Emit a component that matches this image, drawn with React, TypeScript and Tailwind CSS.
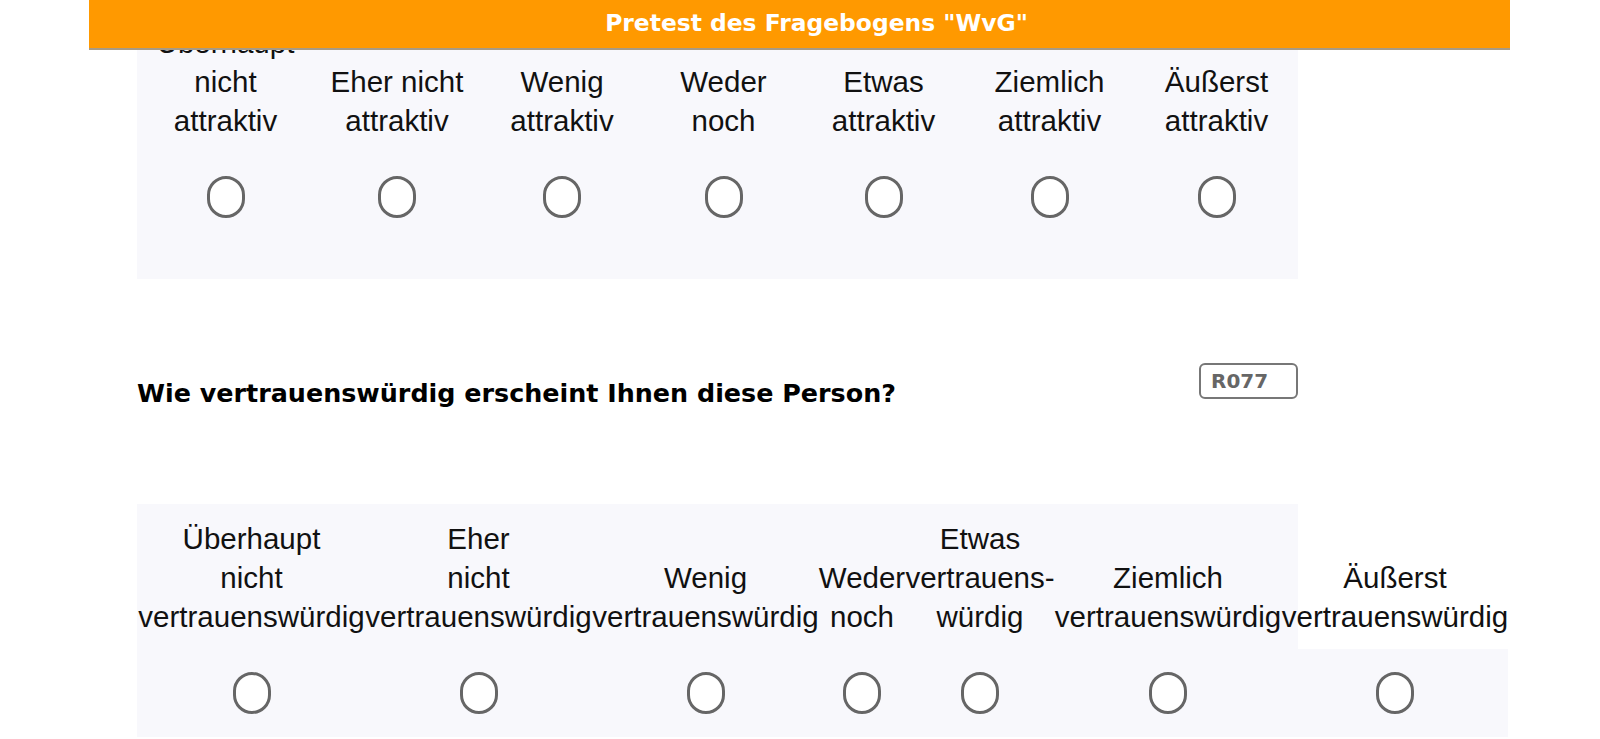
const attraktiv = [
  { lines: ['Überhaupt', 'nicht', 'attraktiv'] },
  { lines: ['Eher nicht', 'attraktiv'] },
  { lines: ['Wenig', 'attraktiv'] },
  { lines: ['Weder', 'noch'] },
  { lines: ['Etwas', 'attraktiv'] },
  { lines: ['Ziemlich', 'attraktiv'] },
  { lines: ['Äußerst', 'attraktiv'] },
];

const vertrauen = [
  { lines: ['Überhaupt', 'nicht', 'vertrauenswürdig'] },
  { lines: ['Eher', 'nicht', 'vertrauenswürdig'] },
  { lines: ['Wenig', 'vertrauenswürdig'] },
  { lines: ['Weder', 'noch'] },
  { lines: ['Etwas', 'vertrauens-', 'würdig'] },
  { lines: ['Ziemlich', 'vertrauenswürdig'] },
  { lines: ['Äußerst', 'vertrauenswürdig'] },
];

function Radio() {
  return <span className="block w-[38px] h-[42px] rounded-full border-[3px] border-[#666666] bg-white" />;
}

function Label({ lines, top }: { lines: string[]; top?: boolean }) {
  return (
    <div className={top ? 'flex flex-col items-center justify-end pt-[15px] pb-[13px]' : 'flex flex-col items-center justify-end pt-[13px] pb-[14px]'}>
      {lines.map((l) => (
        <span key={l} className="block whitespace-nowrap">{l}</span>
      ))}
    </div>
  );
}

export default function App() {
  return (
    <div className="relative min-h-screen w-[1600px] bg-white text-[#111] font-['Liberation_Sans',Arial,sans-serif]">
      <header className="fixed top-0 left-[89px] z-10 flex h-[50px] w-[1421px] items-center justify-center border-b-2 border-[#a89a84] bg-[#ff9900] pl-[34px]">
        <h1 className="font-['DejaVu_Sans',sans-serif] text-[23.4px] font-bold text-white">Pretest des Fragebogens "WvG"</h1>
      </header>

      <main className="ml-[137px] w-[1161px] pt-[10px]">
        {/* Attraktivität */}
        <section className="bg-[#f8f8fc] pb-[37px]">
          <div className="grid grid-cols-[177px_166px_164px_159px_161px_171px_163px] text-[29.5px] leading-[39px] text-center">
            {attraktiv.map((c, i) => (
              <Label key={i} lines={c.lines} />
            ))}
          </div>
          <div className="grid grid-cols-[177px_166px_164px_159px_161px_171px_163px] pt-[22px] pb-[24px]">
            {attraktiv.map((_, i) => (
              <div key={i} className="flex justify-center">
                <Radio />
              </div>
            ))}
          </div>
        </section>

        {/* Frage */}
        <div className="mt-[84px] mb-[96px] flex items-start justify-between">
          <p className="mt-[15px] font-['DejaVu_Sans',sans-serif] text-[25.4px] font-bold leading-[30px] text-black">
            Wie vertrauenswürdig erscheint Ihnen diese Person?
          </p>
          <span className="flex h-[36px] w-[99px] items-center rounded-[6px] border-2 border-[#777] pl-[10px] font-['DejaVu_Sans',sans-serif] text-[20px] font-bold text-[#666]">
            R077
          </span>
        </div>

        {/* Vertrauenswürdigkeit */}
        <section className="bg-[#f8f8fc]">
          <div className="w-[1371px] pl-px">
            <div className="grid grid-cols-[227px_227px_227px_86px_150px_226px_228px] text-[29.5px] leading-[39px] text-center">
              {vertrauen.map((c, i) => (
                <Label key={i} lines={c.lines} top />
              ))}
            </div>
            <div className="grid grid-cols-[227px_227px_227px_86px_150px_226px_228px] bg-[#f8f8fc] pt-[23px] pb-[23px]">
              {vertrauen.map((_, i) => (
                <div key={i} className="flex justify-center">
                  <Radio />
                </div>
              ))}
            </div>
          </div>
        </section>
      </main>
    </div>
  );
}
